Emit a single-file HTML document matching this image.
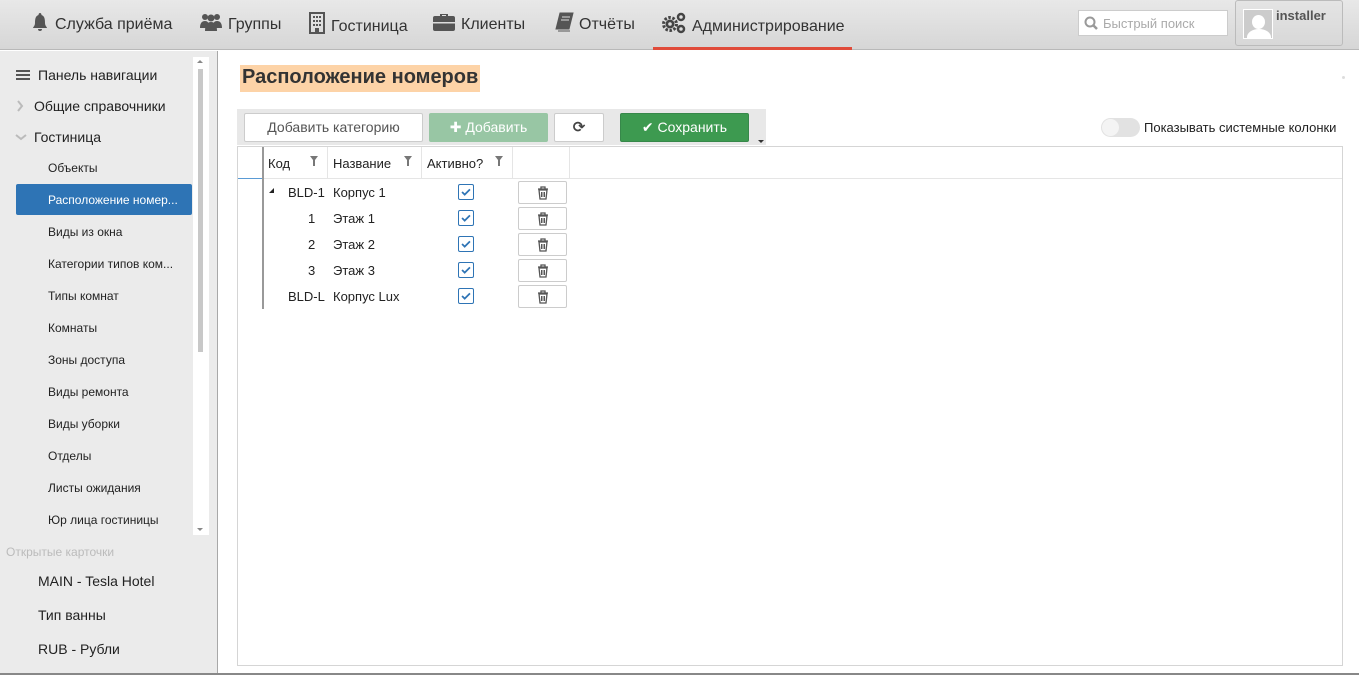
<!DOCTYPE html>
<html><head><meta charset="utf-8"><style>
*{box-sizing:border-box;margin:0;padding:0}
body{width:1359px;height:675px;overflow:hidden;font-family:"Liberation Sans","DejaVu Sans",sans-serif;background:#fff;position:relative;color:#222}
.hdr{position:absolute;left:0;top:0;width:1359px;height:50px;background:linear-gradient(#e8e8e8,#d6d6d6);border-bottom:1px solid #b8b8b8}
.nav{position:absolute;top:12px;font-size:16px;color:#333;white-space:nowrap}
.nav svg{vertical-align:-3px;margin-right:5px}
.ul{position:absolute;left:653px;top:47px;width:199px;height:3px;background:#e04b3a}
.search{position:absolute;left:1078px;top:10px;width:150px;height:26px;background:#fff;border:1px solid #ccc;font-size:13px;color:#aaa;padding:5px 0 0 24px}
.user{position:absolute;left:1235px;top:0;width:108px;height:46px;border:1px solid #bbb;border-radius:3px;background:linear-gradient(#e4e4e4,#d8d8d8)}
.side{position:absolute;left:0;top:51px;width:218px;height:624px;background:#ebebeb;border-right:1px solid #a8a8a8}
.si{position:absolute;font-size:13px;color:#222;white-space:nowrap}
.sel{position:absolute;left:16px;top:184px;width:176px;height:31px;background:#2e74b5;border-radius:2px}
.scroll{position:absolute;left:193px;top:57px;width:16px;height:478px;background:#fff}
.scroll div{position:absolute;left:5px;top:12px;width:5px;height:283px;background:#c8c8c8}
.title{position:absolute;left:240px;top:65px;height:27px;background:#fdd3a7;font-size:20px;font-weight:bold;color:#333;padding:1px 2px}
.tb{position:absolute;left:237px;top:109px;width:529px;height:36px;background:#e8e8e8}
.btn{position:absolute;top:113px;height:29px;border:1px solid #ccc;border-radius:2px;background:#fff;font-size:14px;text-align:center;line-height:27px;color:#555}
.grid{position:absolute;left:237px;top:146px;width:1106px;height:520px;border:1px solid #d5d5d5}
.hc{position:absolute;top:150px;font-size:13px;color:#222}
.cell{position:absolute;font-size:13px;color:#222}
.cb{position:absolute;left:458px;width:16px;height:16px;border:1px solid #2e74b5;border-radius:2px;background:#fff}
.del{position:absolute;left:518px;width:49px;height:23px;border:1px solid #ccc;border-radius:2px;background:#fff}
.flt{position:absolute;top:156px}
</style></head><body>
<div class="hdr"></div>
<div class="nav" style="left:30px"><svg width="20" height="20" viewBox="0 0 20 20"><path d="M10 1c1 0 1.5 1 1.5 2c3 1 3.5 4 3.5 8c0 3 2 4 2 5H3c0-1 2-2 2-5c0-4 .5-7 3.5-8C8.5 2 9 1 10 1zM8 17h4a2 2 0 0 1-4 0z" fill="#555"/></svg>Служба приёма</div>
<div class="nav" style="left:199px"><svg width="24" height="20" viewBox="0 0 24 20"><circle cx="6" cy="5" r="3" fill="#555"/><circle cx="18" cy="5" r="3" fill="#555"/><circle cx="12" cy="6" r="3.5" fill="#555"/><path d="M1 16c0-5 2-7 5-7s4 2 4 7zM14 16c0-5 1-7 4-7s5 2 5 7zM6 19c0-6 2-9 6-9s6 3 6 9z" fill="#555"/></svg>Группы</div>
<div class="nav" style="left:308px"><svg width="18" height="22" viewBox="0 0 18 22"><rect x="2" y="1" width="14" height="20" fill="none" stroke="#555" stroke-width="2"/><path d="M5 4h2v2H5zM8 4h2v2H8zM11 4h2v2h-2zM5 8h2v2H5zM8 8h2v2H8zM11 8h2v2h-2zM5 12h2v2H5zM8 12h2v2H8zM11 12h2v2h-2zM7 16h4v5H7z" fill="#555"/></svg>Гостиница</div>
<div class="nav" style="left:432px"><svg width="24" height="20" viewBox="0 0 24 20"><path d="M8 4V2h8v2h5a2 2 0 0 1 2 2v11a2 2 0 0 1-2 2H3a2 2 0 0 1-2-2V6a2 2 0 0 1 2-2zM10 4h4V3h-4z" fill="#555"/><rect x="1" y="10" width="22" height="1.5" fill="#ddd"/></svg>Клиенты</div>
<div class="nav" style="left:554px"><svg width="20" height="20" viewBox="0 0 20 20"><path d="M6 1h13l-4 16H2zM4 19h12" fill="#555" stroke="#555"/><path d="M8 5h8M7 8h8" stroke="#ddd"/></svg>Отчёты</div>
<div class="nav" style="left:661px"><svg width="26" height="22" viewBox="0 0 26 22"><circle cx="9" cy="12" r="6.5" fill="none" stroke="#444" stroke-width="3" stroke-dasharray="2.5 1.6"/><circle cx="9" cy="12" r="4.5" fill="#444"/><circle cx="9" cy="12" r="1.8" fill="#ddd"/><circle cx="20" cy="5" r="3" fill="none" stroke="#444" stroke-width="2.5"/><circle cx="20" cy="17" r="3" fill="none" stroke="#444" stroke-width="2.5"/></svg>Администрирование</div>
<div class="ul"></div>
<div class="search"><svg style="position:absolute;left:5px;top:5px" width="14" height="14" viewBox="0 0 14 14"><circle cx="6" cy="6" r="4.5" fill="none" stroke="#999" stroke-width="2"/><path d="M9 9l4 4" stroke="#999" stroke-width="2.5"/></svg>Быстрый поиск</div>
<div class="user"><div style="position:absolute;left:7px;top:8px;width:30px;height:30px;background:#ccc;border:1px solid #fff;overflow:hidden"><div style="position:absolute;left:8px;top:5px;width:13px;height:14px;border-radius:50%;background:#fff"></div><div style="position:absolute;left:3px;top:19px;width:24px;height:16px;border-radius:50% 50% 0 0;background:#fff"></div></div><div style="position:absolute;left:40px;top:7px;font-size:13px;font-weight:bold;color:#555">installer</div></div>

<div class="side"></div>
<div class="scroll"><div></div></div>
<div style="position:absolute;left:197px;top:60px;border-left:3px solid transparent;border-right:3px solid transparent;border-bottom:3px solid #888"></div>
<div style="position:absolute;left:197px;top:528px;border-left:3px solid transparent;border-right:3px solid transparent;border-top:3px solid #888"></div>
<div style="position:absolute;left:16px;top:70px;width:14px;height:2px;background:#555;box-shadow:0 4px 0 #555,0 8px 0 #555"></div>
<div class="si" style="left:38px;top:67px;font-size:14px">Панель навигации</div>
<svg style="position:absolute;left:16px;top:100px" width="8" height="12"><path d="M2 1l4 5-4 5" fill="none" stroke="#bbb" stroke-width="2"/></svg>
<div class="si" style="left:34px;top:98px;font-size:14px">Общие справочники</div>
<svg style="position:absolute;left:15px;top:133px" width="12" height="8"><path d="M1 2l5 4 5-4" fill="none" stroke="#bbb" stroke-width="2"/></svg>
<div class="si" style="left:34px;top:129px;font-size:14px">Гостиница</div>
<div class="sel"></div>
<div class="si" style="left:48px;top:161px;font-size:12px">Объекты</div>
<div class="si" style="left:48px;top:193px;font-size:12px;color:#fff">Расположение номер...</div>
<div class="si" style="left:48px;top:225px;font-size:12px">Виды из окна</div>
<div class="si" style="left:48px;top:257px;font-size:12px">Категории типов ком...</div>
<div class="si" style="left:48px;top:289px;font-size:12px">Типы комнат</div>
<div class="si" style="left:48px;top:321px;font-size:12px">Комнаты</div>
<div class="si" style="left:48px;top:353px;font-size:12px">Зоны доступа</div>
<div class="si" style="left:48px;top:385px;font-size:12px">Виды ремонта</div>
<div class="si" style="left:48px;top:417px;font-size:12px">Виды уборки</div>
<div class="si" style="left:48px;top:449px;font-size:12px">Отделы</div>
<div class="si" style="left:48px;top:481px;font-size:12px">Листы ожидания</div>
<div class="si" style="left:48px;top:513px;font-size:12px">Юр лица гостиницы</div>
<div class="si" style="left:6px;top:545px;font-size:12px;color:#bbb">Открытые карточки</div>
<div class="si" style="left:38px;top:573px;font-size:14px">MAIN - Tesla Hotel</div>
<div class="si" style="left:38px;top:607px;font-size:14px">Тип ванны</div>
<div class="si" style="left:38px;top:641px;font-size:14px">RUB - Рубли</div>

<div class="title">Расположение номеров</div>
<div style="position:absolute;left:1342px;top:76px;width:3px;height:3px;background:#ddd;border-radius:50%"></div>
<div class="tb"></div>
<div class="btn" style="left:244px;width:179px">Добавить категорию</div>
<div class="btn" style="left:429px;width:119px;background:#98c6a4;border-color:#98c6a4;color:#fff">✚ Добавить</div>
<div class="btn" style="left:554px;width:50px;color:#444;font-weight:bold;font-size:15px">⟳</div>
<div class="btn" style="left:620px;width:129px;background:#3d9a50;border-color:#37884a;color:#fff">✔ Сохранить</div>
<div style="position:absolute;left:758px;top:140px;border-left:3px solid transparent;border-right:3px solid transparent;border-top:3px solid #333"></div>
<div style="position:absolute;left:1101px;top:118px;width:39px;height:19px;border-radius:10px;background:#e2e2e2"></div>
<div style="position:absolute;left:1102px;top:119px;width:17px;height:17px;border-radius:50%;background:#f4f4f4"></div>
<div class="si" style="left:1144px;top:120px;font-size:13px">Показывать системные колонки</div>

<div class="grid"></div>
<div style="position:absolute;left:238px;top:178px;width:1104px;height:1px;background:#e5e5e5"></div>
<div style="position:absolute;left:238px;top:178px;width:25px;height:1px;background:#5a9bd5"></div>
<div style="position:absolute;left:262px;top:147px;width:2px;height:162px;background:#999"></div>
<div style="position:absolute;left:327px;top:147px;width:1px;height:31px;background:#e5e5e5"></div>
<div style="position:absolute;left:421px;top:147px;width:1px;height:31px;background:#e5e5e5"></div>
<div style="position:absolute;left:512px;top:147px;width:1px;height:31px;background:#e5e5e5"></div>
<div style="position:absolute;left:569px;top:147px;width:1px;height:31px;background:#e5e5e5"></div>
<svg width="0" height="0" style="position:absolute"><defs><symbol id="fn" viewBox="0 0 8 10"><path d="M0 0h8L5 4v6H3V4z" fill="#777"/></symbol><symbol id="ck" viewBox="0 0 16 16"><path d="M3.5 8l3 3 6-6" fill="none" stroke="#2e74b5" stroke-width="2"/></symbol><symbol id="tr" viewBox="0 0 12 14"><path d="M1 3h10M4 3V1h4v2M2 4h8l-1 9H3z" fill="none" stroke="#555" stroke-width="1.3"/><path d="M4.5 6v5M6 6v5M7.5 6v5" stroke="#555"/></symbol></defs></svg>
<div class="hc" style="left:268px;top:156px">Код</div><svg class="flt" style="left:310px" width="8" height="10"><use href="#fn"/></svg>
<div class="hc" style="left:333px;top:156px">Название</div><svg class="flt" style="left:404px" width="8" height="10"><use href="#fn"/></svg>
<div class="hc" style="left:427px;top:156px">Активно?</div><svg class="flt" style="left:495px" width="8" height="10"><use href="#fn"/></svg>

<div style="position:absolute;left:269px;top:188px;border-left:5px solid transparent;border-bottom:5px solid #222"></div>
<div class="cell" style="left:288px;top:185px">BLD-1</div><div class="cell" style="left:333px;top:185px">Корпус 1</div>
<div class="cell" style="left:308px;top:211px">1</div><div class="cell" style="left:333px;top:211px">Этаж 1</div>
<div class="cell" style="left:308px;top:237px">2</div><div class="cell" style="left:333px;top:237px">Этаж 2</div>
<div class="cell" style="left:308px;top:263px">3</div><div class="cell" style="left:333px;top:263px">Этаж 3</div>
<div class="cell" style="left:288px;top:289px">BLD-L</div><div class="cell" style="left:333px;top:289px">Корпус Lux</div>

<div class="cb" style="top:184px"><svg width="14" height="14"><use href="#ck"/></svg></div>
<div class="cb" style="top:210px"><svg width="14" height="14"><use href="#ck"/></svg></div>
<div class="cb" style="top:236px"><svg width="14" height="14"><use href="#ck"/></svg></div>
<div class="cb" style="top:262px"><svg width="14" height="14"><use href="#ck"/></svg></div>
<div class="cb" style="top:288px"><svg width="14" height="14"><use href="#ck"/></svg></div>
<div class="del" style="top:181px"><svg style="position:absolute;left:18px;top:4px" width="12" height="14"><use href="#tr"/></svg></div>
<div class="del" style="top:207px"><svg style="position:absolute;left:18px;top:4px" width="12" height="14"><use href="#tr"/></svg></div>
<div class="del" style="top:233px"><svg style="position:absolute;left:18px;top:4px" width="12" height="14"><use href="#tr"/></svg></div>
<div class="del" style="top:259px"><svg style="position:absolute;left:18px;top:4px" width="12" height="14"><use href="#tr"/></svg></div>
<div class="del" style="top:285px"><svg style="position:absolute;left:18px;top:4px" width="12" height="14"><use href="#tr"/></svg></div>
<div style="position:absolute;left:0;top:673px;width:1359px;height:2px;background:#888"></div>
</body></html>
